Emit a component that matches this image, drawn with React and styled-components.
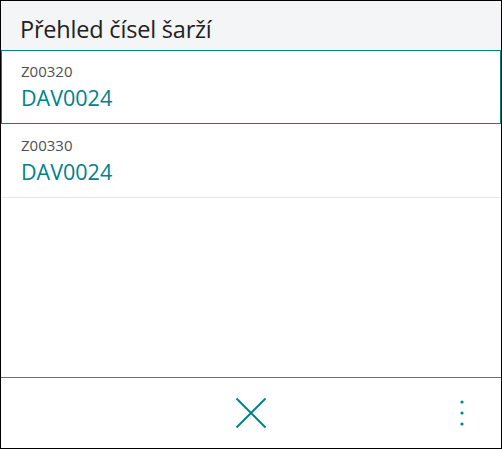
import React from 'react'
import styled, { createGlobalStyle } from 'styled-components'

const GlobalStyle = createGlobalStyle`
    html, body {
        margin: 0;
        padding: 0;
        background: #ffffff;
    }
    * {
        box-sizing: border-box;
    }
`;

const Frame = styled.div`
    width: 502px;
    height: 449px;
    border: 1px solid #000000;
    display: flex;
    flex-direction: column;
    font-family: "Open Sans", "Noto Sans", sans-serif;
    background: #ffffff;
`;

const Header = styled.div`
    height: 49px;
    background: #f4f5f7;
    display: flex;
    align-items: center;
    padding: 7px 19px 0;
`;

const Title = styled.h1`
    margin: 0;
    font-size: 23.5px;
    font-weight: 400;
    color: #212121;
    letter-spacing: -0.2px;
`;

const List = styled.div`
    flex: 1;
    display: flex;
    flex-direction: column;
`;

const Item = styled.div`
    height: 74px;
    padding: 10px 19px 0;
    border: 1px solid ${p => (p.$selected ? '#00828a' : 'transparent')};
    border-bottom-color: ${p => (p.$selected ? '#00828a' : '#e6e6e6')};
    display: flex;
    flex-direction: column;
`;

const Code = styled.div`
    font-size: 15px;
    color: #505050;
    line-height: 20px;
`;

const Value = styled.div`
    font-size: 21.5px;
    color: #00828a;
    line-height: 30px;
    margin-top: 2px;
`;

const Footer = styled.div`
    height: 71px;
    border-top: 1px solid #707070;
    display: flex;
    align-items: center;
`;

const CloseButton = styled.button`
    border: none;
    background: none;
    padding: 0;
    margin-left: 233px;
    width: 34px;
    height: 34px;
    display: flex;
    align-items: center;
    justify-content: center;
    cursor: pointer;
`;

const MoreButton = styled.button`
    border: none;
    background: none;
    padding: 0;
    margin-left: auto;
    margin-right: 29px;
    width: 20px;
    height: 34px;
    display: flex;
    align-items: center;
    justify-content: center;
    cursor: pointer;
`;

const lots = [
    { code: 'Z00320', value: 'DAV0024', selected: true },
    { code: 'Z00330', value: 'DAV0024' },
]

const App = () => {
  return (
    <Frame>
        <GlobalStyle/>
        <Header>
            <Title>Přehled čísel šarží</Title>
        </Header>
        <List>
            {lots.map(l => (
                <Item key={l.code} $selected={l.selected}>
                    <Code>{l.code}</Code>
                    <Value>{l.value}</Value>
                </Item>
            ))}
        </List>
        <Footer>
            <CloseButton aria-label="Zavřít">
                <svg width="32" height="32" viewBox="0 0 32 32">
                    <path d="M1.5 1.5 L30.5 30.5 M30.5 1.5 L1.5 30.5" stroke="#00828a" strokeWidth="2" fill="none"/>
                </svg>
            </CloseButton>
            <MoreButton aria-label="Více">
                <svg width="4" height="26" viewBox="0 0 4 26">
                    <circle cx="2" cy="2" r="1.6" fill="#00828a"/>
                    <circle cx="2" cy="13" r="1.6" fill="#00828a"/>
                    <circle cx="2" cy="24" r="1.6" fill="#00828a"/>
                </svg>
            </MoreButton>
        </Footer>
    </Frame>
  )
}

export default App
